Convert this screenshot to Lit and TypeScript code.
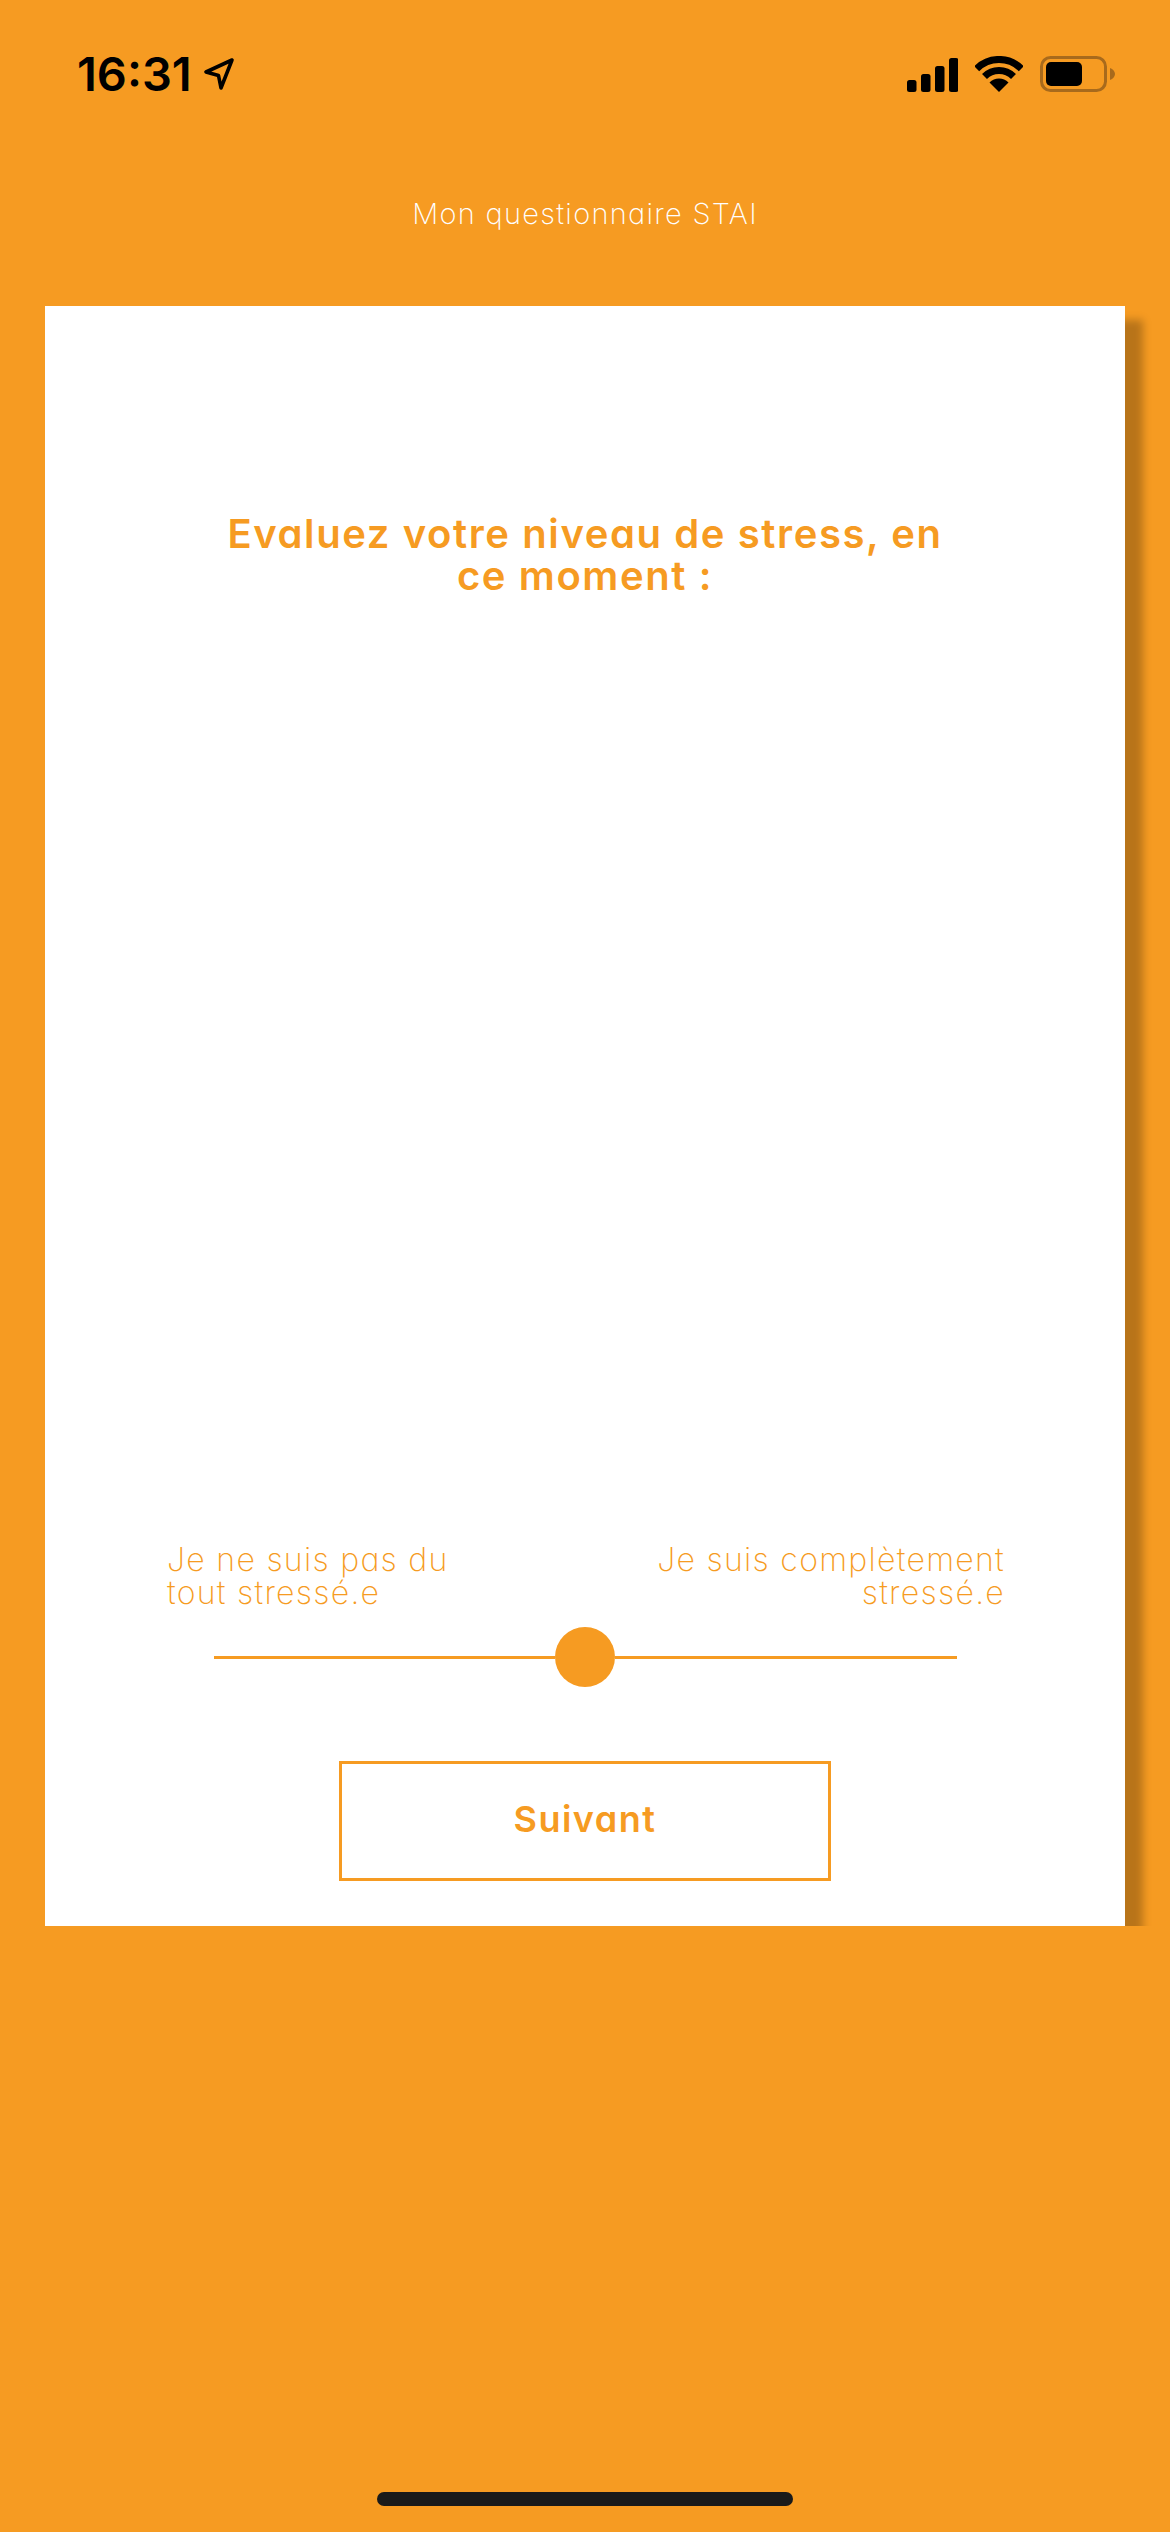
import { LitElement, css, html } from "lit";
import { customElement, state } from "lit/decorators.js";

@customElement("app-root")
export class AppRoot extends LitElement {
  @state() title1 = "Evaluez votre niveau de stress, en";
  @state() title2 = "ce moment :";

  render() {
    return html`
      <div class="status">
        <div class="clock">
          <span class="time">16:31</span>
          <svg class="arrow" width="32" height="34" viewBox="0 0 32 34">
            <path d="M29 3 L3 15 L15.5 18.5 L18 31 Z" fill="none" stroke="#000" stroke-width="3.6" stroke-linejoin="round" />
          </svg>
        </div>
        <div class="indicators">
          <svg width="51" height="34" viewBox="0 0 51 34">
            <rect x="0" y="22" width="9.5" height="12" rx="2.5" />
            <rect x="14" y="16" width="9.5" height="18" rx="2.5" />
            <rect x="28" y="8" width="9.5" height="26" rx="2.5" />
            <rect x="42" y="0" width="9.5" height="34" rx="2.5" />
          </svg>
          <svg class="wifi" width="48" height="36" viewBox="0 0 48 36">
            <path d="M1.7 12.7 A31.5 31.5 0 0 1 46.3 12.7" fill="none" stroke="#000" stroke-width="7" />
            <path d="M9.5 20.5 A20.5 20.5 0 0 1 38.5 20.5" fill="none" stroke="#000" stroke-width="7" />
            <path d="M24 36 L14.5 26.5 A13.5 13.5 0 0 1 33.5 26.5 Z" />
          </svg>
          <svg class="battery" width="75" height="36" viewBox="0 0 75 36">
            <rect x="1.5" y="1.5" width="64" height="33" rx="9" fill="none" stroke="#a86a1c" stroke-width="3" />
            <rect x="6" y="6" width="36" height="24" rx="5" />
            <path d="M70 12 C73 13 75 15.5 75 18 C75 20.5 73 23 70 24 Z" fill="#a86a1c" />
          </svg>
        </div>
      </div>

      <div class="header">Mon questionnaire STAI</div>

      <main class="card">
        <h1 class="question">${this.title1}<br />${this.title2}</h1>
        <div class="labels">
          <div>Je ne suis pas du<br />tout stressé.e</div>
          <div class="end">Je suis complètement<br />stressé.e</div>
        </div>
        <div class="slider">
          <div class="line"></div>
          <div class="thumb"></div>
          <div class="line"></div>
        </div>
        <button class="next">Suivant</button>
      </main>

      <div class="footer">
        <div class="home"></div>
      </div>
    `;
  }

  static styles = css`
    :host {
      display: flex;
      flex-direction: column;
      width: 1170px;
      height: 2532px;
      background: #f69b22;
      overflow: hidden;
      font-family: "Inter", "Liberation Sans", sans-serif;
      font-feature-settings: "cv11" 1;
    }

    .status {
      display: flex;
      justify-content: space-between;
      align-items: flex-start;
      height: 190px;
      padding: 55px 55px 0 77px;
      box-sizing: border-box;
      flex: none;
    }
    .clock {
      display: flex;
      align-items: center;
      gap: 11px;
    }
    .time {
      font-family: "Inter", sans-serif;
      font-feature-settings: normal;
      font-weight: 600;
      font-size: 47px;
      line-height: 38px;
      color: #000;
    }
    .arrow {
      margin-top: -1px;
    }
    .indicators {
      display: flex;
      align-items: flex-start;
      gap: 17px;
      padding-top: 3px;
    }
    .wifi {
      margin-top: -2px;
    }
    .battery {
      margin-top: -2px;
    }

    .header {
      flex: none;
      height: 50px;
      line-height: 50px;
      margin-top: -1px;
      padding-bottom: 1px;
      text-align: center;
      font-size: 29px;
      font-weight: 250;
      letter-spacing: 1.3px;
      color: #fff;
    }

    .card {
      flex: none;
      position: relative;
      width: 1080px;
      height: 1620px;
      margin: 66px 0 0 45px;
      box-sizing: border-box;
      background: #fff;
      box-shadow: 18px 14px 8px rgba(0, 0, 0, 0.25);
      display: flex;
      flex-direction: column;
      align-items: center;
      padding-top: 207px;
      color: #f69b22;
    }
    .question {
      margin: 0;
      font-size: 40px;
      line-height: 42px;
      font-weight: 600;
      letter-spacing: 1.6px;
      text-align: center;
      white-space: nowrap;
    }
    .labels {
      display: flex;
      justify-content: space-between;
      align-self: stretch;
      margin-top: 946px;
      padding: 0 120px 0 122px;
      font-size: 32px;
      line-height: 33px;
      font-weight: 250;
      letter-spacing: 1.3px;
    }
    .end {
      text-align: right;
    }
    .slider {
      display: flex;
      align-items: center;
      width: 743px;
      margin-top: 18px;
    }
    .line {
      flex: 1;
      height: 3px;
      background: #f69b22;
    }
    .thumb {
      width: 60px;
      height: 60px;
      border-radius: 50%;
      background: #f69b22;
    }
    .next {
      width: 492px;
      height: 120px;
      margin-top: 74px;
      box-sizing: border-box;
      border: 3px solid #f69b22;
      background: #fff;
      color: #f69b22;
      font-family: inherit;
      font-feature-settings: inherit;
      font-size: 36px;
      font-weight: 600;
      letter-spacing: 1.5px;
      padding: 0 0 4px;
    }

    .footer {
      flex: 1;
      position: relative;
      background: #f69b22;
      display: flex;
      flex-direction: column;
      justify-content: flex-end;
      align-items: center;
      padding-bottom: 26px;
    }
    .home {
      width: 416px;
      height: 14px;
      border-radius: 7px;
      background: #1a1a1a;
    }
  `;
}
